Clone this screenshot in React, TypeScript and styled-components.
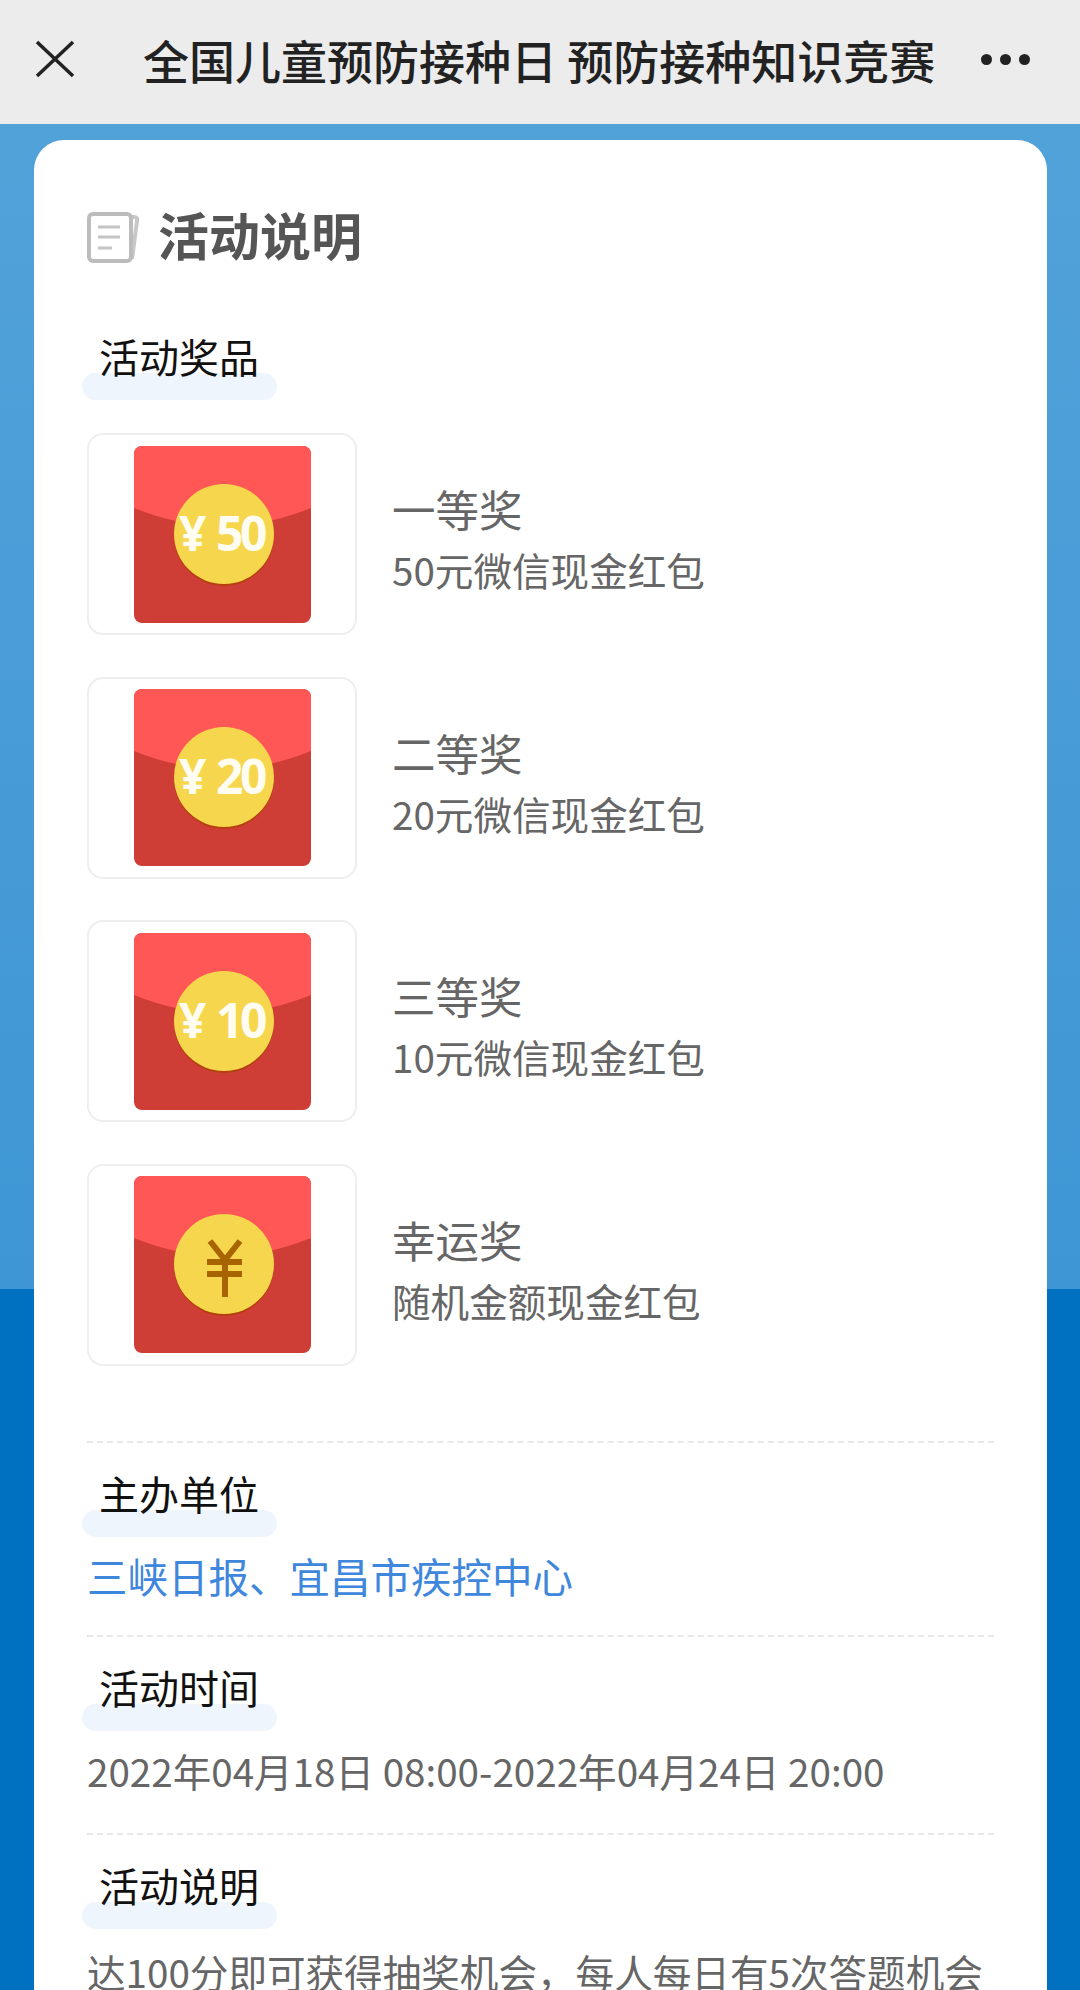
import styled, { createGlobalStyle } from 'styled-components';

const GlobalStyle = createGlobalStyle`
  html, body {
    margin: 0;
    padding: 0;
  }
  body {
    font-family: "Noto Sans CJK SC", "Liberation Sans", sans-serif;
  }
`;

const prizes = [
  { title: '一等奖', desc: '50元微信现金红包', amount: '50' },
  { title: '二等奖', desc: '20元微信现金红包', amount: '20' },
  { title: '三等奖', desc: '10元微信现金红包', amount: '10' },
  { title: '幸运奖', desc: '随机金额现金红包' },
];

const RedPacket = ({ amount }: { amount?: string }) => (
  <PacketSvg viewBox="0 0 177 177">
    <rect width="177" height="177" rx="8" fill="#cf3e36" />
    <path d="M0 62 V8 a8 8 0 0 1 8-8 H169 a8 8 0 0 1 8 8 V62 Q88.5 98 0 62Z" fill="#ff5656" />
    <circle cx="90" cy="90" r="50" fill="#b5400f" />
    <circle cx="90" cy="88" r="50" fill="#f6d64c" />
    {amount ? (
      <>
        <CoinText x="45" y="105" fontSize="48">¥</CoinText>
        <CoinText x="82" y="105" fontSize="48" letterSpacing="-3.5">{amount}</CoinText>
      </>
    ) : (
      <g stroke="#a86400" strokeWidth="6" fill="none">
        <path d="M76 65 L91 84 L106 65" />
        <path d="M73 86 H108 M73 98 H108 M91 84 V121" />
      </g>
    )}
  </PacketSvg>
);

const DocIcon = () => (
  <HeadingIcon width="52" height="51" viewBox="0 0 52 51" fill="none">
    <path d="M40 5 H47 Q51 5 50 9 L45 47" stroke="#c8c8c8" strokeWidth="4" />
    <rect x="2" y="2" width="42" height="47" rx="4" fill="#fff" stroke="#bcbcbc" strokeWidth="4" />
    <path d="M11 15 H33 M11 25 H33 M11 36 H25" stroke="#c4c4c4" strokeWidth="3" />
  </HeadingIcon>
);

export default function App() {
  return (
    <Page>
      <GlobalStyle />
      <TopBar>
        <svg width="40" height="38" viewBox="0 0 40 38" fill="none">
          <path d="M2 2 L38 36 M38 2 L2 36" stroke="#222" strokeWidth="3.5" />
        </svg>
        <TopTitle>全国儿童预防接种日 预防接种知识竞赛</TopTitle>
        <Dots>
          <i />
          <i />
          <i />
        </Dots>
      </TopBar>
      <Card>
        <CardHeading>
          <DocIcon />
          <CardTitle>活动说明</CardTitle>
        </CardHeading>
        <Label>活动奖品</Label>
        <PrizeList>
          {prizes.map((p) => (
            <PrizeRow key={p.title}>
              <PrizeBox>
                <RedPacket amount={p.amount} />
              </PrizeBox>
              <PrizeText>
                <PrizeTitle>{p.title}</PrizeTitle>
                <PrizeDesc>{p.desc}</PrizeDesc>
              </PrizeText>
            </PrizeRow>
          ))}
        </PrizeList>
        <Section $tail={41}>
          <Label>主办单位</Label>
          <Body $link>三峡日报、宜昌市疾控中心</Body>
        </Section>
        <Section $tail={45}>
          <Label>活动时间</Label>
          <Body>2022年04月18日 08:00-2022年04月24日 20:00</Body>
        </Section>
        <Section $tail={0}>
          <Label>活动说明</Label>
          <Body $gap={24}>达100分即可获得抽奖机会，每人每日有5次答题机会</Body>
        </Section>
      </Card>
    </Page>
  );
}

const Page = styled.div`
  height: 1990px;
  overflow: hidden;
  background: linear-gradient(#52a2da 124px, #3e96d4 1289px, #0071c1 1289px);
`;

const TopBar = styled.header`
  height: 124px;
  box-sizing: border-box;
  padding: 0 50px 6px 35px;
  display: flex;
  align-items: center;
  background: #ececec;
`;

const TopTitle = styled.h1`
  margin: 0 0 0 68px;
  font-size: 46px;
  line-height: 60px;
  font-weight: 500;
  color: #222;
  white-space: nowrap;
`;

const Dots = styled.div`
  margin-left: auto;
  display: flex;
  gap: 8px;

  i {
    width: 11px;
    height: 11px;
    border-radius: 50%;
    background: #222;
  }
`;

const Card = styled.main`
  margin: 16px 33px 0 34px;
  padding: 0 53px 0 53px;
  height: 1900px;
  border-radius: 30px 30px 0 0;
  background: #fff;
`;

const CardHeading = styled.div`
  display: flex;
  align-items: center;
  gap: 19px;
  height: 188px;
`;

const HeadingIcon = styled.svg`
  margin-top: 6px;
`;

const CardTitle = styled.h2`
  margin: 0;
  font-size: 51px;
  line-height: 60px;
  font-weight: 700;
  color: #555;
`;

const Label = styled.div`
  position: relative;
  isolation: isolate;
  width: 195px;
  height: 72px;
  margin-left: -5px;
  padding-left: 17px;
  box-sizing: border-box;
  font-size: 40px;
  line-height: 56px;
  color: #111;

  &::before {
    content: '';
    position: absolute;
    left: 0;
    right: 0;
    bottom: 0;
    height: 27px;
    border-radius: 14px;
    background: #eef5fd;
    z-index: -1;
  }
`;

const PrizeList = styled.div`
  display: flex;
  flex-direction: column;
  gap: 41.67px;
  margin-top: 33px;
  margin-bottom: 75px;
`;

const PrizeRow = styled.div`
  display: flex;
  align-items: center;
  gap: 35px;
`;

const PrizeBox = styled.div`
  width: 270px;
  height: 202px;
  box-sizing: border-box;
  border: 2px solid #eeeeee;
  border-radius: 16px;
  display: flex;
  align-items: center;
  justify-content: center;
`;

const PacketSvg = styled.svg`
  width: 177px;
  height: 177px;
`;

const CoinText = styled.text`
  font-family: "Noto Sans", sans-serif;
  font-weight: 700;
  fill: #fffdf2;
`;

const PrizeText = styled.div`
  padding-top: 10px;
`;

const PrizeTitle = styled.div`
  font-size: 43.5px;
  line-height: 60px;
  color: #666;
`;

const PrizeDesc = styled.div`
  font-size: 38.6px;
  line-height: 60px;
  color: #666;
`;

const Section = styled.section<{ $tail: number }>`
  border-top: 2px dashed #e8e8e8;
  padding-top: 22px;
  padding-bottom: ${(p) => p.$tail}px;
`;

const Body = styled.p<{ $link?: boolean; $gap?: number }>`
  margin: ${(p) => p.$gap ?? 21}px 0 0;
  font-size: ${(p) => (p.$link ? '40.5px' : '38.6px')};
  line-height: 36px;
  white-space: nowrap;
  color: ${(p) => (p.$link ? '#3f87dc' : '#666')};
`;
